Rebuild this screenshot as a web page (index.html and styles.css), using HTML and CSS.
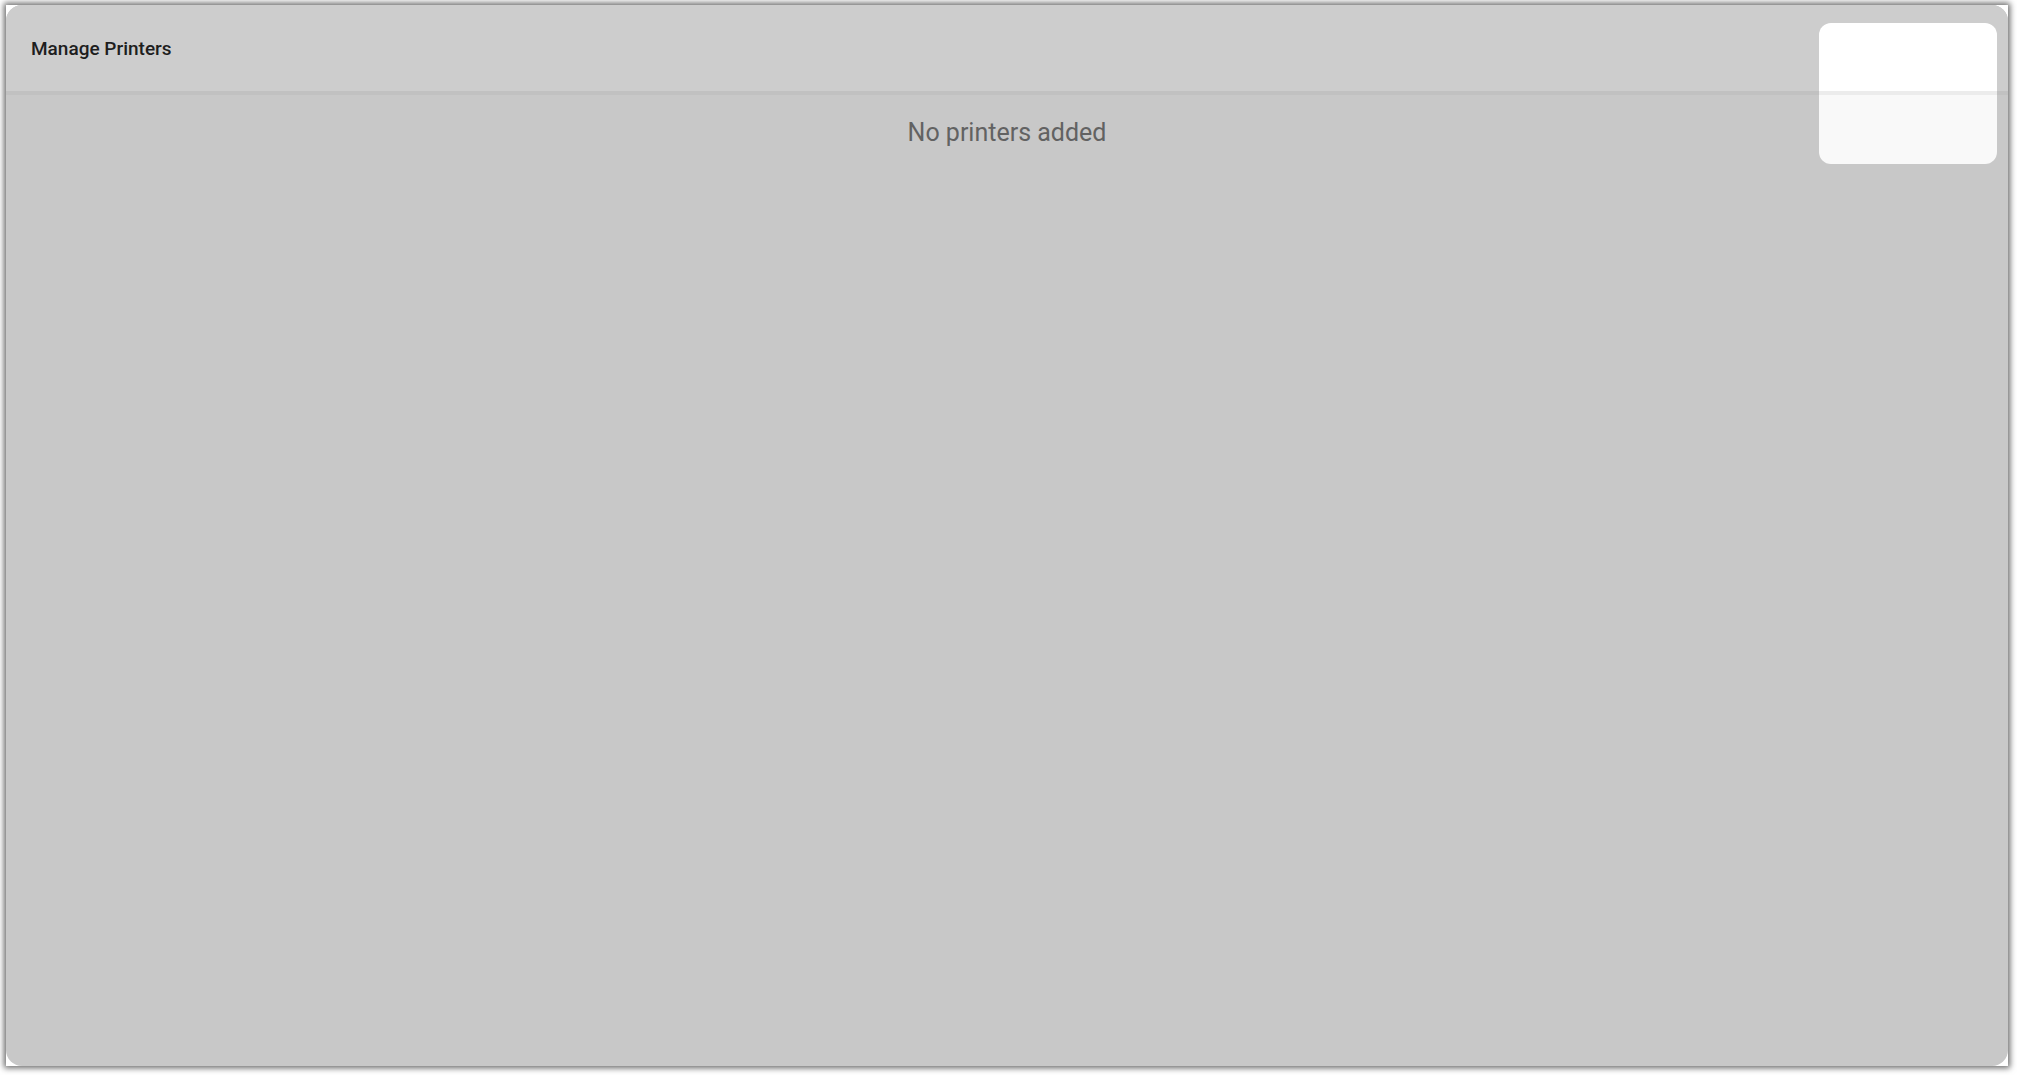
FILE: index.html
```html
<!DOCTYPE html>
<html lang="en">
<head>
<meta charset="utf-8">
<title>Manage Printers</title>
<link rel="stylesheet" href="styles.css">
</head>
<body>
  <div class="frame">
    <div class="panel">
      <header class="panel-header">
        <h1 class="panel-title">Manage Printers</h1>
      </header>
      <main class="panel-body">
        <p class="empty-text">No printers added</p>
      </main>
    </div>
    <div class="corner-card">
      <div class="corner-top"></div>
      <div class="corner-line"></div>
      <div class="corner-bottom"></div>
    </div>
  </div>
</body>
</html>
```
FILE: styles.css
```css
html, body {
  margin: 0;
  padding: 0;
  background: #ffffff;
  width: 2017px;
  height: 1075px;
  overflow: hidden;
  font-family: Roboto, "Liberation Sans", Arial, sans-serif;
}

.frame {
  position: relative;
  margin: 5px 9px 0 6px;
  height: 1061px;
  background: #ffffff;
  box-shadow: 0 0 6px 2px rgba(0, 0, 0, 0.6);
  display: flex;
}

.panel {
  flex: 1;
  display: flex;
  flex-direction: column;
  background: #c8c8c8;
  border-radius: 16px;
  overflow: hidden;
}

.panel-header {
  background: #cdcdcd;
  border-bottom: 4px solid #c1c1c1;
  padding: 33px 25px 0;
  box-sizing: border-box;
  height: 90px;
}

.panel-title {
  margin: 0;
  font-size: 19px;
  line-height: 22px;
  font-weight: 500;
  color: #1e1e1e;
}

.panel-body {
  flex: 1;
  padding-top: 23px;
}

.empty-text {
  margin: 0;
  text-align: center;
  font-size: 25px;
  line-height: 29px;
  color: #626262;
}

.corner-card {
  position: absolute;
  top: 18px;
  right: 11px;
  width: 178px;
  height: 141px;
  border-radius: 12px;
  overflow: hidden;
  display: flex;
  flex-direction: column;
}

.corner-top {
  height: 68px;
  background: #ffffff;
}

.corner-line {
  height: 4px;
  background: #ececec;
}

.corner-bottom {
  flex: 1;
  background: #f9f9f9;
}
```
